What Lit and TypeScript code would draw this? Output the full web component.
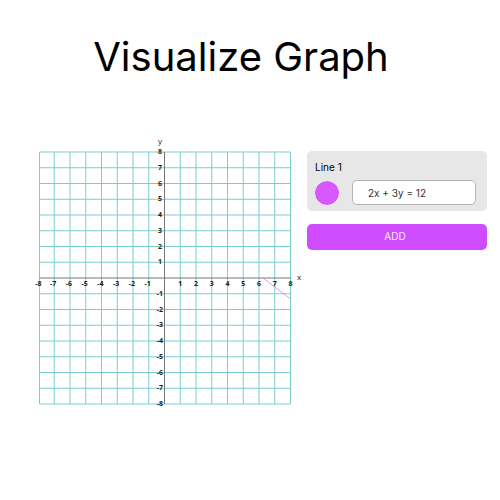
import { LitElement, html, svg, css } from "lit";
import { customElement, property, state } from "lit/decorators.js";

const UNIT = 15.75;
const ORIGIN_X = 132.5;
const ORIGIN_Y = 144;
const EXTENT = 8;
const TICKS = Array.from({ length: EXTENT * 2 + 1 }, (_, i) => i - EXTENT);
const LEFT = 7.5;
const RIGHT = ORIGIN_X + EXTENT * UNIT;
const TOP = ORIGIN_Y - EXTENT * UNIT;
const BOTTOM = ORIGIN_Y + EXTENT * UNIT;

const px = (v: number) => Math.max(LEFT, ORIGIN_X + v * UNIT);
const py = (v: number) => ORIGIN_Y - v * UNIT;

@customElement("coordinate-plane")
export class CoordinatePlane extends LitElement {
  @property() stroke = "#d957ff";

  static styles = css`
    :host {
      display: block;
    }
    .plane {
      display: block;
      width: 100%;
      overflow: visible;
    }
    .grid {
      stroke: #7ccdd0;
      stroke-width: 1;
    }
    .axis {
      stroke: #777;
      stroke-width: 1;
    }
    .tick {
      font: 700 7px "Open Sans", "Noto Sans", sans-serif;
      fill: #1c1c1c;
      text-anchor: middle;
    }
    .name {
      font: 400 8px "Open Sans", "Noto Sans", sans-serif;
      fill: #222;
      text-anchor: middle;
    }
    .plot {
      stroke-width: 1;
      stroke-opacity: 0.6;
    }
  `;

  render() {
    const marks = TICKS.filter((t) => t !== 0);
    return html`
      <svg class="plane" viewBox="0 0 270 276" role="img" aria-label="Coordinate plane">
        ${marks.map(
          (t) => svg`
            <line class="grid" x1=${px(t)} x2=${px(t)} y1=${TOP} y2=${BOTTOM}></line>
            <line class="grid" x1=${LEFT} x2=${RIGHT} y1=${py(t)} y2=${py(t)}></line>`
        )}
        <line class="axis" x1=${LEFT} x2=${RIGHT} y1=${ORIGIN_Y} y2=${ORIGIN_Y}></line>
        <line class="axis" x1=${ORIGIN_X} x2=${ORIGIN_X} y1=${TOP} y2=${BOTTOM}></line>
        <line class="plot" stroke=${this.stroke} x1=${px(6.25)} y1=${py(0)} x2=${px(8)} y2=${py(-1.33)}></line>
        ${marks.map(
          (t) => svg`
            <text class="tick" x=${px(t) - (t < 0 ? 1 : 0)} y=${ORIGIN_Y + 7.5}>${t}</text>
            <text class="tick" x=${ORIGIN_X - (t < 0 ? 4.5 : 4.5)} y=${py(t) + 2}>${t}</text>`
        )}
        <text class="name" x="128" y="10">y</text>
        <text class="name" x="267" y="146">x</text>
      </svg>
    `;
  }
}

@customElement("app-root")
export class AppRoot extends LitElement {
  @state() private color = "#d957ff";

  static styles = css`
    :host {
      display: block;
      min-height: 100vh;
      background: #fff;
      color: #000;
      font-family: Inter, "Liberation Sans", sans-serif;
    }
    * {
      box-sizing: border-box;
    }
    .title {
      margin: 0;
      padding: 33px 18px 0 0;
      font-size: 40px;
      line-height: 48px;
      font-weight: 400;
      text-align: center;
    }
    .content {
      display: grid;
      grid-template-columns: minmax(0, 3fr) minmax(0, 2fr);
      gap: 5px;
      align-items: start;
      padding: 53px 13px 0 32px;
    }
    .panel {
      display: flex;
      flex-direction: column;
      gap: 13px;
      padding-top: 17px;
    }
    .card {
      display: flex;
      flex-direction: column;
      gap: 5px;
      padding: 8px 11px 6px 8px;
      border-radius: 5px;
      background: #e7e7e7;
    }
    .label {
      font-size: 10px;
      line-height: 16px;
    }
    .row {
      display: flex;
      align-items: center;
      gap: 13px;
    }
    .swatch {
      appearance: none;
      flex: none;
      width: 24px;
      height: 24px;
      padding: 0;
      border: 0;
      border-radius: 50%;
      background: none;
      overflow: hidden;
      cursor: pointer;
    }
    .swatch::-webkit-color-swatch-wrapper {
      padding: 0;
    }
    .swatch::-webkit-color-swatch {
      border: 0;
      border-radius: 50%;
    }
    .equation {
      flex: 1;
      min-width: 0;
      height: 25px;
      padding: 0 15px;
      border: 1px solid #b4b4b4;
      border-radius: 5px;
      background: #fff;
      color: #333;
      font: 400 10px Inter, "Liberation Sans", sans-serif;
    }
    .add {
      height: 26px;
      padding: 0 4px 2px 0;
      border: 0;
      border-radius: 5px;
      background: #cf4bff;
      color: #fbeeff;
      font: 400 10px Inter, "Liberation Sans", sans-serif;
      cursor: pointer;
    }
  `;

  private pickColor(e: Event) {
    this.color = (e.target as HTMLInputElement).value;
  }

  render() {
    return html`
      <h1 class="title">Visualize Graph</h1>
      <main class="content">
        <coordinate-plane .stroke=${this.color}></coordinate-plane>
        <section class="panel">
          <div class="card">
            <label class="label" for="equation">Line 1</label>
            <div class="row">
              <input class="swatch" type="color" aria-label="Line color" .value=${this.color} @input=${this.pickColor} />
              <input class="equation" id="equation" type="text" value="2x + 3y = 12" />
            </div>
          </div>
          <button class="add" type="button">ADD</button>
        </section>
      </main>
    `;
  }
}
